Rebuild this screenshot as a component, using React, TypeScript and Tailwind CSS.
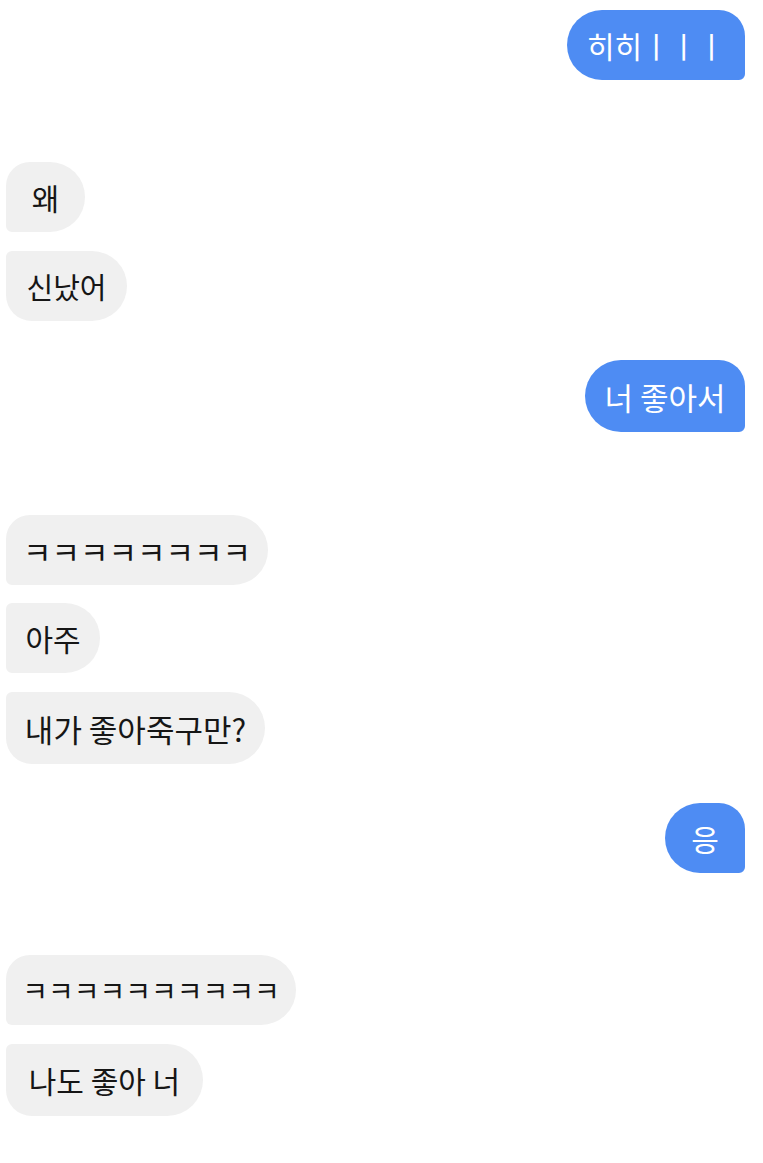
import React from "react";

type Msg = {
  text: string;
  side: "l" | "r";
  w: string;
  mt: string;
  shape: string;
  h: string;
  fs: string;
};

const msgs: Msg[] = [
  { text: "히히ㅣㅣㅣ", side: "r", w: "w-[178px]", mt: "mt-[10px]", h: "h-[70px]", fs: "text-[30px]", shape: "rounded-l-[35px] rounded-tr-[26px] rounded-br-[6px]" },
  { text: "왜", side: "l", w: "w-[79px]", mt: "mt-[82px]", h: "h-[70px]", fs: "text-[30px]", shape: "rounded-r-[35px] rounded-tl-[24px] rounded-bl-[6px]" },
  { text: "신났어", side: "l", w: "w-[121px]", mt: "mt-[19px]", h: "h-[70px]", fs: "text-[29px]", shape: "rounded-r-[35px] rounded-tl-[6px] rounded-bl-[26px]" },
  { text: "너 좋아서", side: "r", w: "w-[160px]", mt: "mt-[39px]", h: "h-[72px]", fs: "text-[31px]", shape: "rounded-l-[36px] rounded-tr-[26px] rounded-br-[6px]" },
  { text: "ㅋㅋㅋㅋㅋㅋㅋㅋ", side: "l", w: "w-[262px]", mt: "mt-[83px]", h: "h-[70px]", fs: "text-[31px]", shape: "rounded-r-[35px] rounded-tl-[24px] rounded-bl-[6px]" },
  { text: "아주", side: "l", w: "w-[94px]", mt: "mt-[18px]", h: "h-[70px]", fs: "text-[30px]", shape: "rounded-r-[35px] rounded-tl-[6px] rounded-bl-[6px]" },
  { text: "내가 좋아죽구만?", side: "l", w: "w-[259px]", mt: "mt-[19px]", h: "h-[72px]", fs: "text-[31px]", shape: "rounded-r-[36px] rounded-tl-[6px] rounded-bl-[26px]" },
  { text: "응", side: "r", w: "w-[80px]", mt: "mt-[39px]", h: "h-[70px]", fs: "text-[30px]", shape: "rounded-l-[35px] rounded-tr-[26px] rounded-br-[6px]" },
  { text: "ㅋㅋㅋㅋㅋㅋㅋㅋㅋㅋ", side: "l", w: "w-[290px]", mt: "mt-[82px]", h: "h-[70px]", fs: "text-[28px]", shape: "rounded-r-[35px] rounded-tl-[24px] rounded-bl-[6px]" },
  { text: "나도 좋아 너", side: "l", w: "w-[197px]", mt: "mt-[19px]", h: "h-[72px]", fs: "text-[30px]", shape: "rounded-r-[36px] rounded-tl-[6px] rounded-bl-[26px]" },
];

export default function App() {
  return (
    <div
      className="w-[763px] h-[1163px] bg-white overflow-hidden flex flex-col"
      style={{ fontFamily: '"Noto Sans CJK KR", "Noto Sans", sans-serif' }}
    >
      {msgs.map((m, i) => (
        <div
          key={i}
          className={`${m.mt} flex ${m.side === "r" ? "justify-end pr-[18px]" : "justify-start pl-[6px]"}`}
        >
          <div
            className={`${m.w} ${m.h} ${m.shape} ${m.fs} flex items-center justify-center leading-none whitespace-nowrap ${
              m.side === "r" ? "bg-[#4e8cf3] text-white" : "bg-[#f0f0f0] text-[#161616]"
            }`}
          >
            {m.text}
          </div>
        </div>
      ))}
    </div>
  );
}
